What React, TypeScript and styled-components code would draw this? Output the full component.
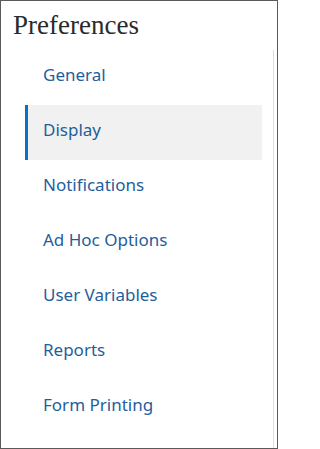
import React, { useState } from 'react';
import styled, { createGlobalStyle } from 'styled-components';

const GlobalStyle = createGlobalStyle`
  html, body {
    margin: 0;
    padding: 0;
    background: #ffffff;
  }
`;

const Panel = styled.div`
  box-sizing: border-box;
  width: 278px;
  height: 449px;
  border: 1px solid #5a5a5a;
  background: #ffffff;
  display: flex;
  flex-direction: column;
  overflow: hidden;
`;

const Title = styled.h1`
  margin: 0;
  height: 49px;
  padding: 9px 0 0 12px;
  box-sizing: border-box;
  font-family: 'Liberation Serif', 'Times New Roman', serif;
  font-weight: normal;
  font-size: 27px;
  line-height: 31px;
  color: #2b2b2b;
`;

const NavList = styled.ul`
  list-style: none;
  margin: 0 3px 0 24px;
  padding: 0 11px 0 0;
  flex: 1;
  border-right: 1px solid #dcdcdc;
`;

const NavItem = styled.li<{ $active?: boolean }>`
  box-sizing: border-box;
  height: 55px;
  display: flex;
  align-items: center;
  padding: 0 0 7px 15px;
  border-left: 3px solid ${p => (p.$active ? '#0572ce' : 'transparent')};
  background: ${p => (p.$active ? '#f1f1f1' : 'transparent')};
  font-family: 'Noto Sans', 'Open Sans', sans-serif;
  font-size: 17px;
  color: #1f5e9c;
  cursor: pointer;
`;

const items = [
  'General',
  'Display',
  'Notifications',
  'Ad Hoc Options',
  'User Variables',
  'Reports',
  'Form Printing',
];

export default function App() {
  const [active, setActive] = useState('Display');

  return (
    <>
      <GlobalStyle />
      <Panel>
        <Title>Preferences</Title>
        <NavList>
          {items.map(item => (
            <NavItem key={item} $active={item === active} onClick={() => setActive(item)}>
              {item}
            </NavItem>
          ))}
        </NavList>
      </Panel>
    </>
  );
}
